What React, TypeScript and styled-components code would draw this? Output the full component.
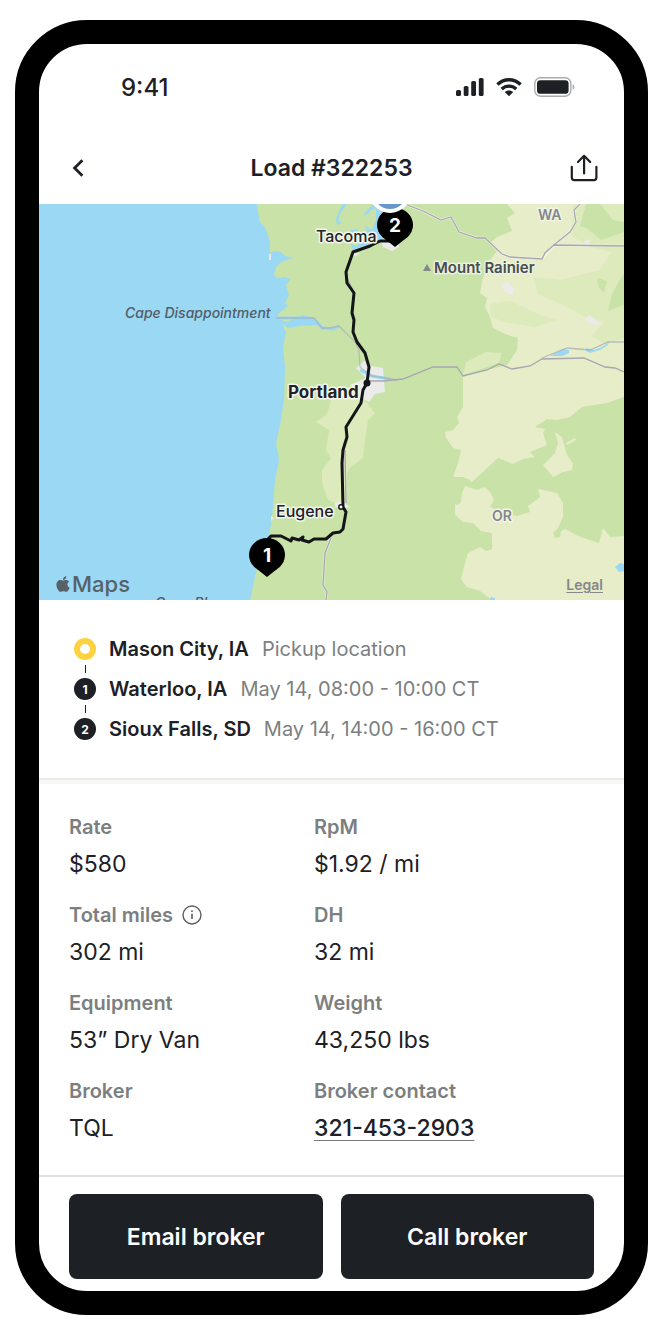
import React from "react";
import styled, { createGlobalStyle } from "styled-components";
import { FaApple } from "react-icons/fa";

const ink = "#1d2025";
const grey = "#7c7f80";

const GlobalStyle = createGlobalStyle`
  *, *::before, *::after { box-sizing: border-box; }
  body {
    margin: 0;
    background: #ffffff;
    color: ${ink};
    font-family: Inter, "Liberation Sans", sans-serif;
  }
`;

const Page = styled.div`
  padding: 20px 15px 14px;
`;

const Phone = styled.main`
  overflow: hidden;
  border: 24px solid #000000;
  border-radius: 72px;
  background: #ffffff;
`;

const StatusBar = styled.div`
  display: flex;
  align-items: center;
  justify-content: space-between;
  height: 88px;
  padding: 0 49px 0 82px;
`;

const Time = styled.span`
  font-size: 24px;
  line-height: 32px;
  font-weight: 500;
`;

const StatusIcons = styled.div`
  display: flex;
  align-items: center;
  gap: 12px;
  padding-bottom: 2px;

  svg {
    display: block;
  }
`;

const Header = styled.header`
  display: grid;
  grid-template-columns: 28px 1fr 28px;
  align-items: center;
  height: 72px;
  padding: 0 26px;
`;

const Title = styled.h1`
  margin: 0;
  font-size: 23px;
  line-height: 32px;
  font-weight: 600;
  text-align: center;
`;

const IconButton = styled.button`
  display: flex;
  align-items: center;
  justify-content: center;
  width: 28px;
  height: 32px;
  padding: 0;
  border: 0;
  background: none;
  color: ${ink};
  cursor: pointer;
`;

const MapFrame = styled.section`
  position: relative;

  > svg {
    display: block;
    width: 100%;
    aspect-ratio: 585 / 396;
  }
`;

const MapBrand = styled.div`
  position: absolute;
  left: 15px;
  bottom: 4px;
  display: flex;
  align-items: center;
  color: #56616a;
  font-size: 22px;
  line-height: 24px;
  font-weight: 500;
`;

const LegalLink = styled.a`
  position: absolute;
  right: 21px;
  bottom: 6px;
  color: #85878a;
  font-size: 14px;
  line-height: 18px;
  font-weight: 600;
  text-underline-offset: 2px;
`;

const Stops = styled.ol`
  margin: 0;
  padding: 38px 35px;
  list-style: none;
`;

const Stop = styled.li`
  display: flex;
  gap: 13px;
`;

const Rail = styled.div`
  display: flex;
  flex-direction: column;
  align-items: center;
  width: 22px;
`;

const Marker = styled.span<{ $current?: boolean }>`
  display: flex;
  align-items: center;
  justify-content: center;
  width: 22px;
  height: 22px;
  border: ${(p) => (p.$current ? "6px solid #fed141" : "0")};
  border-radius: 50%;
  background: ${(p) => (p.$current ? "#ffffff" : ink)};
  color: #ffffff;
  font-size: 12px;
  font-weight: 700;
`;

const Connector = styled.span`
  width: 1px;
  height: 8px;
  margin: 5px 0;
  background: ${ink};
`;

const StopText = styled.p`
  display: flex;
  flex-wrap: wrap;
  gap: 0 13px;
  margin: 0;
  font-size: 20px;
  line-height: 22px;
  color: ${grey};

  strong {
    font-weight: 600;
    color: ${ink};
  }
`;

const Divider = styled.hr`
  height: 6px;
  margin: 0;
  border: 0;
  border-top: 2px solid #ebebe8;
  background: #f7f7f6;
`;

const Details = styled.dl`
  display: grid;
  grid-template-columns: 7fr 8fr;
  row-gap: 19px;
  margin: 0;
  padding: 29px 30px;
`;

const Label = styled.dt`
  display: flex;
  align-items: center;
  gap: 9px;
  margin-bottom: 5px;
  font-size: 20px;
  line-height: 28px;
  font-weight: 600;
  color: ${grey};
`;

const Value = styled.dd`
  margin: 0;
  font-size: 23px;
  line-height: 36px;
`;

const PhoneLink = styled.a`
  color: ${ink};
  font-weight: 500;
  text-decoration-color: #777a7c;
  text-decoration-thickness: 1px;
  text-underline-offset: 4px;
`;

const Actions = styled.footer`
  display: grid;
  grid-template-columns: 1fr 1fr;
  gap: 18px;
  padding: 17px 30px 12px;
  border-top: 2px solid #e2e2e2;
`;

const ActionButton = styled.button`
  height: 85px;
  border: 0;
  border-radius: 8px;
  background: ${ink};
  color: #ffffff;
  font-family: inherit;
  font-size: 23px;
  line-height: 32px;
  font-weight: 600;
  cursor: pointer;
`;

const MapLabel = styled.text<{ $size: number; $weight: number; $fill: string; $halo?: string; $italic?: boolean }>`
  font-size: ${(p) => p.$size}px;
  font-weight: ${(p) => p.$weight};
  font-style: ${(p) => (p.$italic ? "italic" : "normal")};
  fill: ${(p) => p.$fill};
  stroke: ${(p) => p.$halo ?? "none"};
  stroke-width: 3px;
  stroke-linejoin: round;
  paint-order: stroke;
`;

const SignalIcon = () => (
  <svg width="28" height="20" viewBox="0 0 28 20" fill={ink} aria-hidden="true">
    <rect x="0" y="13" width="5" height="6" rx="1.6" />
    <rect x="7.7" y="9" width="4.8" height="10" rx="1.6" />
    <rect x="15.2" y="4" width="4.8" height="15" rx="1.6" />
    <rect x="22.8" y="1" width="4.8" height="18" rx="1.6" />
  </svg>
);

const WifiIcon = () => (
  <svg width="26" height="20" viewBox="0 0 26 20" fill="none" stroke={ink} strokeWidth="3.4" aria-hidden="true">
    <path d="M1.4 7.6C8.2 1.2 17.8 1.2 24.6 7.6" />
    <path d="M5.7 12C10 8.1 16 8.1 20.3 12" />
    <path d="M8.7 15.1C11 12.9 15 12.9 17.3 15.1L13 19.2Z" fill={ink} stroke="none" />
  </svg>
);

const BatteryIcon = () => (
  <svg width="41" height="20" viewBox="0 0 41 20" aria-hidden="true">
    <rect x="0.8" y="0.8" width="36" height="18.4" rx="5.5" fill="none" stroke="#a9abac" strokeWidth="1.4" />
    <rect x="3" y="3.2" width="31.6" height="13.6" rx="3.4" fill={ink} />
    <path d="M38.6 7.2C41 8.2 41 11.8 38.6 12.8Z" fill="#a9abac" />
  </svg>
);

const BackIcon = () => (
  <svg width="28" height="28" viewBox="0 0 28 28" fill="none" stroke={ink} strokeWidth="2.8" aria-hidden="true">
    <path d="M17.4 6.2L9.6 14L17.4 21.8" />
  </svg>
);

const ShareIcon = () => (
  <svg width="28" height="28" viewBox="0 0 28 28" fill="none" stroke={ink} strokeWidth="2.2" strokeLinecap="round" strokeLinejoin="round" aria-hidden="true">
    <path d="M1.8 12.8V23.6Q1.8 26.2 4.4 26.2H23.8Q26.4 26.2 26.4 23.6V12.8" />
    <path d="M14.1 19.5V2M8 8L14.1 1.8L20.2 8" />
  </svg>
);

const InfoIcon = () => (
  <svg width="20" height="20" viewBox="0 0 20 20" role="img" aria-label="More information">
    <circle cx="10" cy="10" r="9" fill="none" stroke="#5c5f62" strokeWidth="1.4" />
    <path d="M10 8.7V14" stroke="#5c5f62" strokeWidth="1.6" />
    <circle cx="10" cy="6.2" r="0.9" fill="#5c5f62" />
  </svg>
);

const MapPin = ({ x, y, label }: { x: number; y: number; label: string }) => (
  <g>
    <path d={`M${x} ${y + 22}L${x - 10} ${y + 14}H${x + 10}Z`} />
    <ellipse cx={x} cy={y} rx="18" ry="17" />
    <text x={x} y={y + 7} textAnchor="middle" fill="#ffffff" fontSize="19" fontWeight="700">
      {label}
    </text>
  </g>
);

const RouteMap = () => (
  <svg viewBox="39 204 585 396" preserveAspectRatio="xMidYMid slice" role="img" aria-label="Route from Eugene to Tacoma">
    <rect x="39" y="204" width="585" height="396" fill="#9ad8f3" />

    {/* Land */}
    <path
      fill="#c8e2a8"
      d="M257 204L258 213L260 222L264 226L267 232L270 243L270 253L274 251L281 252L285 256L293 258L281 262L276 267L274 275L277 278L284 277L291 279L286 285L289 295L285 303L288 306L279 313L276 318L287 322L303 315L315 318L318 325L300 326L288 328L282 324L286 332L283 347L285 367L284 400L281 420L276 443L279 460L275 480L272 517L269 537L256 572L250 600H624V204Z"
    />

    {/* Plateau and desert */}
    <g fill="#e6edc8">
      <path d="M507 204L515 213L507 218L512 231L497 237L490 243L498 250L490 260L483 277L480 293L487 298L485 307L490 317L493 328L505 334L518 338L517 350L507 365L463 376V407L457 417L459 423L453 430L445 432L446 438L453 448L461 450L458 463L453 477L463 477L468 479L472 482L498 458L513 464L523 459L535 457L530 452L547 445L543 433L545 429L535 427L547 419L557 420L570 417L582 407L607 403L624 397V204Z" />
      <path d="M555 432L562 437L567 455L573 463L572 470L563 472L553 477L543 465L555 453L558 443Z" />
      <path d="M566 443L575 438L576 440L567 445Z" />
      <path d="M465 486L477 490L485 487L490 492L494 500L490 507L506 514L517 516L530 512L528 506L540 497L538 489L557 493L563 503V517L558 528L553 533L555 538L560 537L561 531L565 529L578 536L599 543L603 528L610 537L624 536V600H492L480 591L467 587L461 579L465 563L468 553L480 547L486 551L492 549L492 533L481 531L473 523L463 522L455 515V507L461 502L462 493Z" />
    </g>

    {/* Foothills and the Willamette valley */}
    <g fill="#dceabc">
      <path d="M573 204H624V338L605 344L592 336L604 322L584 316L565 306L538 294L533 277L560 280L600 270L612 252L590 247L572 236Z" />
      <path d="M490 304L510 301L540 315L557 320L535 327L505 322L491 317Z" />
      <path d="M331 400L340 386L352 390L367 403L375 413L368 420L365 440L363 458L350 468L347 473V503L341 505L328 500L322 483V470L331 458L326 450L329 430L316 422L327 414Z" />
      <path d="M466 362L486 352L502 353L499 363L463 375Z" />
    </g>
    <g fill="#c8e2a8">
      <path d="M586 204H600L613 220L624 222V232L601 240L588 229L580 226Z" />
      <path d="M597 278L607 281L604 292L599 288ZM624 274L618 283L612 294L608 311L624 305Z" />
    </g>

    {/* Built-up areas */}
    <g fill="#ebecea">
      <path d="M356 368L364 361L371 366L383 368L385 392L375 394L369 402L361 398L350 385L366 378Z" />
      <path d="M381 241L398 238L399 247L392 251L383 247ZM354 252L360 254L352 257ZM502 285L508 282L514 288L513 295L504 291ZM584 319L590 315L603 326L592 324Z" />
      <path d="M585 241L590 239L589 245L584 246ZM455 504L459 506L456 509ZM335 503L342 501L350 507L344 509L335 507ZM269 254H271V260H269ZM271 516L274 518L271 521Z" />
    </g>

    {/* Puget Sound, rivers and lakes */}
    <g fill="#9ad8f3">
      <path d="M343 204L339 211L336 219L337 225L342 223L338 220L341 212L347 204Z" />
      <path d="M376 208L385 214L384 238L375 243L361 247L353 250L351 244L357 246L362 240L356 235L349 231L357 229L360 235L367 232L365 226L372 230L376 220Z" />
      <path d="M374 204L376 208L371 210L368 214L364 216L366 211Z" />
      <path d="M550 356L563 349L569 350L569 353L562 356ZM586 348L594 350L602 347L609 342L608 345L600 350L590 353L586 351Z" />
      <path d="M615 567L620 563L624 564V571L619 572ZM490 600L491 597L495 598V600Z" />
    </g>
    <path d="M276 318H303L314 319L322 328L333 329L339 326" fill="none" stroke="#9ad8f3" strokeWidth="3" />
    <path d="M360 370L372 376L390 379" fill="none" stroke="#9ad8f3" strokeWidth="3" />

    {/* Highways */}
    <g fill="none" stroke="#ffffff" strokeWidth="2.6" opacity="0.5">
      <path d="M405 204L423 211L441 220L451 217L459 232L477 238L485 238L502 254L510 257L542 259L555 244L570 232L576 222L574 210L580 204M553 245L624 246" />
      <path d="M331 538L325 553L323 585L327 592L326 600" />
    </g>
    <g fill="none" stroke="#a8a6b0" strokeWidth="1.3">
      <path d="M405 204L410 206L423 211L441 220L451 217L459 232L477 238L485 238L502 254L510 257L542 259L545 253L555 244L570 232L576 222L574 210L580 204M553 245L624 246" />
      <path d="M369 381L383 381L403 379L433 367L457 367L463 376L487 370L499 364L512 369L530 366L542 359L584 358L605 367L615 368L624 372" />
      <path d="M542 358L567 348L590 350L608 342L624 342" opacity="0.7" />
      <path d="M276 318H314L322 328H330L339 326L355 342L359 350L360 367L372 376L397 380" opacity="0.6" />
      <path d="M331 538L325 553L323 585L327 592L326 600M345 450L346 503M347 278L354 293" />
    </g>

    {/* Route */}
    <path
      fill="none"
      stroke="#141518"
      strokeWidth="3"
      strokeLinejoin="round"
      d="M397 241L380 241L370 246L353 252L346 272L347 283L354 293L352 313L354 320L353 332L357 342L365 353L369 367L367 383L363 390L361 403L346 427L347 437L343 450L342 463L343 507L346 512L343 529L340 532L333 533L326 539L314 539L309 542L302 540L303 537L299 540L292 538L291 541L281 536L271 536L266 541"
    />
    <circle cx="367" cy="383" r="3.5" fill="#141518" />
    <circle cx="341" cy="507" r="2.2" fill="#ffffff" stroke="#141518" strokeWidth="1.5" />

    <MapLabel x="316" y="242" $size={16} $weight={500} $fill="#202326" $halo="#f3f6ed">Tacoma</MapLabel>
    <MapLabel x="288" y="398" $size={17} $weight={700} $fill="#202326" $halo="#f3f6ed">Portland</MapLabel>
    <MapLabel x="276" y="517" $size={16} $weight={500} $fill="#202326" $halo="#f3f6ed">Eugene</MapLabel>
    <path d="M423 271L427 264L431 271Z" fill="#85878a" />
    <MapLabel x="434" y="273" $size={15} $weight={600} $fill="#4b4d52" $halo="#eaf3dd">Mount Rainier</MapLabel>
    <MapLabel x="538" y="220" $size={14} $weight={600} $fill="#85878f" $halo="#f1f5e4">WA</MapLabel>
    <MapLabel x="492" y="521" $size={14} $weight={600} $fill="#85878f" $halo="#f1f5e4">OR</MapLabel>
    <MapLabel x="125" y="318" $size={14} $weight={500} $fill="#515d69" $italic>Cape Disappointment</MapLabel>
    <MapLabel x="155" y="608" $size={14} $weight={500} $fill="#515d69" $italic>Cape Blanco</MapLabel>

    <MapPin x={395} y={225} label="2" />
    <MapPin x={267} y={555} label="1" />
    <circle cx="390" cy="192" r="19" fill="#6797c8" stroke="#ffffff" strokeWidth="4" />
  </svg>
);

const stops = [
  { place: "Mason City, IA", note: "Pickup location" },
  { place: "Waterloo, IA", note: "May 14, 08:00 - 10:00 CT" },
  { place: "Sioux Falls, SD", note: "May 14, 14:00 - 16:00 CT" },
];

const details: { label: string; value: React.ReactNode; info?: boolean }[] = [
  { label: "Rate", value: "$580" },
  { label: "RpM", value: "$1.92 / mi" },
  { label: "Total miles", value: "302 mi", info: true },
  { label: "DH", value: "32 mi" },
  { label: "Equipment", value: "53” Dry Van" },
  { label: "Weight", value: "43,250 lbs" },
  { label: "Broker", value: "TQL" },
  { label: "Broker contact", value: <PhoneLink href="tel:3214532903">321-453-2903</PhoneLink> },
];

export default function App() {
  return (
    <Page>
      <GlobalStyle />
      <Phone>
        <StatusBar>
          <Time>9:41</Time>
          <StatusIcons>
            <SignalIcon />
            <WifiIcon />
            <BatteryIcon />
          </StatusIcons>
        </StatusBar>
        <Header>
          <IconButton type="button" aria-label="Back">
            <BackIcon />
          </IconButton>
          <Title>Load #322253</Title>
          <IconButton type="button" aria-label="Share">
            <ShareIcon />
          </IconButton>
        </Header>
        <MapFrame>
          <RouteMap />
          <MapBrand>
            <FaApple size={18} aria-hidden="true" />
            Maps
          </MapBrand>
          <LegalLink href="#legal">Legal</LegalLink>
        </MapFrame>
        <Stops>
          {stops.map((stop, i) => (
            <Stop key={stop.place}>
              <Rail>
                <Marker $current={i === 0}>{i > 0 && i}</Marker>
                {i < stops.length - 1 && <Connector />}
              </Rail>
              <StopText>
                <strong>{stop.place}</strong>
                <span>{stop.note}</span>
              </StopText>
            </Stop>
          ))}
        </Stops>
        <Divider />
        <Details>
          {details.map((item) => (
            <div key={item.label}>
              <Label>
                {item.label}
                {item.info && <InfoIcon />}
              </Label>
              <Value>{item.value}</Value>
            </div>
          ))}
        </Details>
        <Actions>
          <ActionButton type="button">Email broker</ActionButton>
          <ActionButton type="button">Call broker</ActionButton>
        </Actions>
      </Phone>
    </Page>
  );
}
